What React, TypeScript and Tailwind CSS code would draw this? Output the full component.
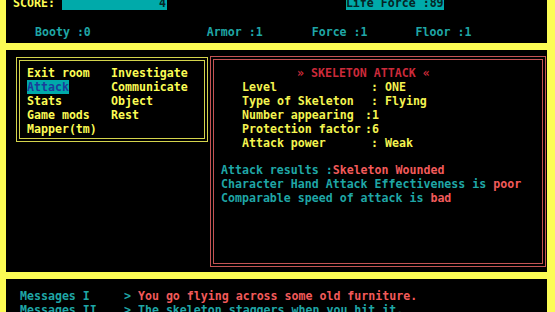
import React from 'react';

const MENU: [string, string][] = [
  ['Exit room', 'Investigate'],
  ['Attack', 'Communicate'],
  ['Stats', 'Object'],
  ['Game mods', 'Rest'],
  ['Mapper(tm)', ''],
];

// label, value, value sits one cell to the right
const MONSTER: [string, string, boolean][] = [
  ['Level', ': ONE', true],
  ['Type of Skeleton', ': Flying', true],
  ['Number appearing', ':1', false],
  ['Protection factor', ':6', false],
  ['Attack power', ': Weak', true],
];

export default function App() {
  return (
    <div className="h-[312px] w-[555px] overflow-hidden bg-black font-['DejaVu_Sans_Mono','Liberation_Mono',monospace] text-[11.6px] font-bold leading-[14px] whitespace-pre">
      <div className="-mt-[4px] border-l-[6px] border-r-[8px] border-[#fcfc54]">
        {/* Score line */}
        <div className="flex h-[14px] items-center">
          <span className="ml-[7px] text-[#fcfc54]">SCORE: </span>
          <span className="flex h-[14px] w-[105px] items-center justify-end bg-[#00aaaa] pr-[1px] text-[#062424]">4</span>
          <span className="ml-[179px] bg-[#00aaaa] text-[#062424]">Life Force :89</span>
        </div>

        {/* Stats */}
        <div className="mt-[15px] flex h-[14px] items-center text-[#1fa6a6]">
          <span className="ml-[29px]">Booty :0</span>
          <span className="ml-[116px]">Armor :1</span>
          <span className="ml-[49px]">Force :1</span>
          <span className="ml-[48px]">Floor :1</span>
        </div>

        <div className="mt-[4px] h-[7px] bg-[#fcfc54]" />

        {/* Middle panels */}
        <div className="flex h-[222px] items-start pt-[6px]">
          <div className="ml-[10px] mt-[1px] h-[85px] w-[192px] border-4 border-double border-[#d4d44c] pl-[7px] pt-[5px] text-[#fcfc54]">
            {MENU.map(([a, b]) => (
              <div key={a} className="flex h-[14px]">
                <div className="w-[84px]">
                  <span className={a === 'Attack' ? 'bg-[#00aaaa] text-[#1c3c9c]' : ''}>{a}</span>
                </div>
                <span>{b}</span>
              </div>
            ))}
          </div>

          <div className="ml-[2px] h-[211px] w-[336px] border-4 border-double border-[#c45454] pl-[7px] pt-[6px]">
            <div className="ml-[76px] text-[#cc2a3a]">» SKELETON ATTACK «</div>
            {MONSTER.map(([label, value, shift]) => (
              <div key={label} className="ml-[21px] flex text-[#f4f450]">
                <span className="w-[123px]">{label}</span>
                <span className={shift ? 'ml-[6px]' : ''}>{value}</span>
              </div>
            ))}
            <div className="mt-[13px] text-[#1fa6a6]">
              <div>
                Attack results :<span className="text-[#f25a5a]">Skeleton Wounded</span>
              </div>
              <div>
                Character Hand Attack Effectiveness is <span className="text-[#f25a5a]">poor</span>
              </div>
              <div>
                Comparable speed of attack is <span className="text-[#f25a5a]">bad</span>
              </div>
            </div>
          </div>
        </div>

        <div className="h-[7px] bg-[#fcfc54]" />

        {/* Messages */}
        <div className="pt-[10px]">
          <div className="flex">
            <span className="ml-[14px] w-[104px] text-[#1fa6a6]">Messages I</span>
            <span className="text-[#1fa6a6]">{'> '}</span>
            <span className="text-[#f25a5a]">You go flying across some old furniture.</span>
          </div>
          <div className="flex text-[#1fa6a6]">
            <span className="ml-[14px] w-[104px]">Messages II</span>
            <span>{'> The skeleton staggers when you hit it.'}</span>
          </div>
        </div>
      </div>
    </div>
  );
}
